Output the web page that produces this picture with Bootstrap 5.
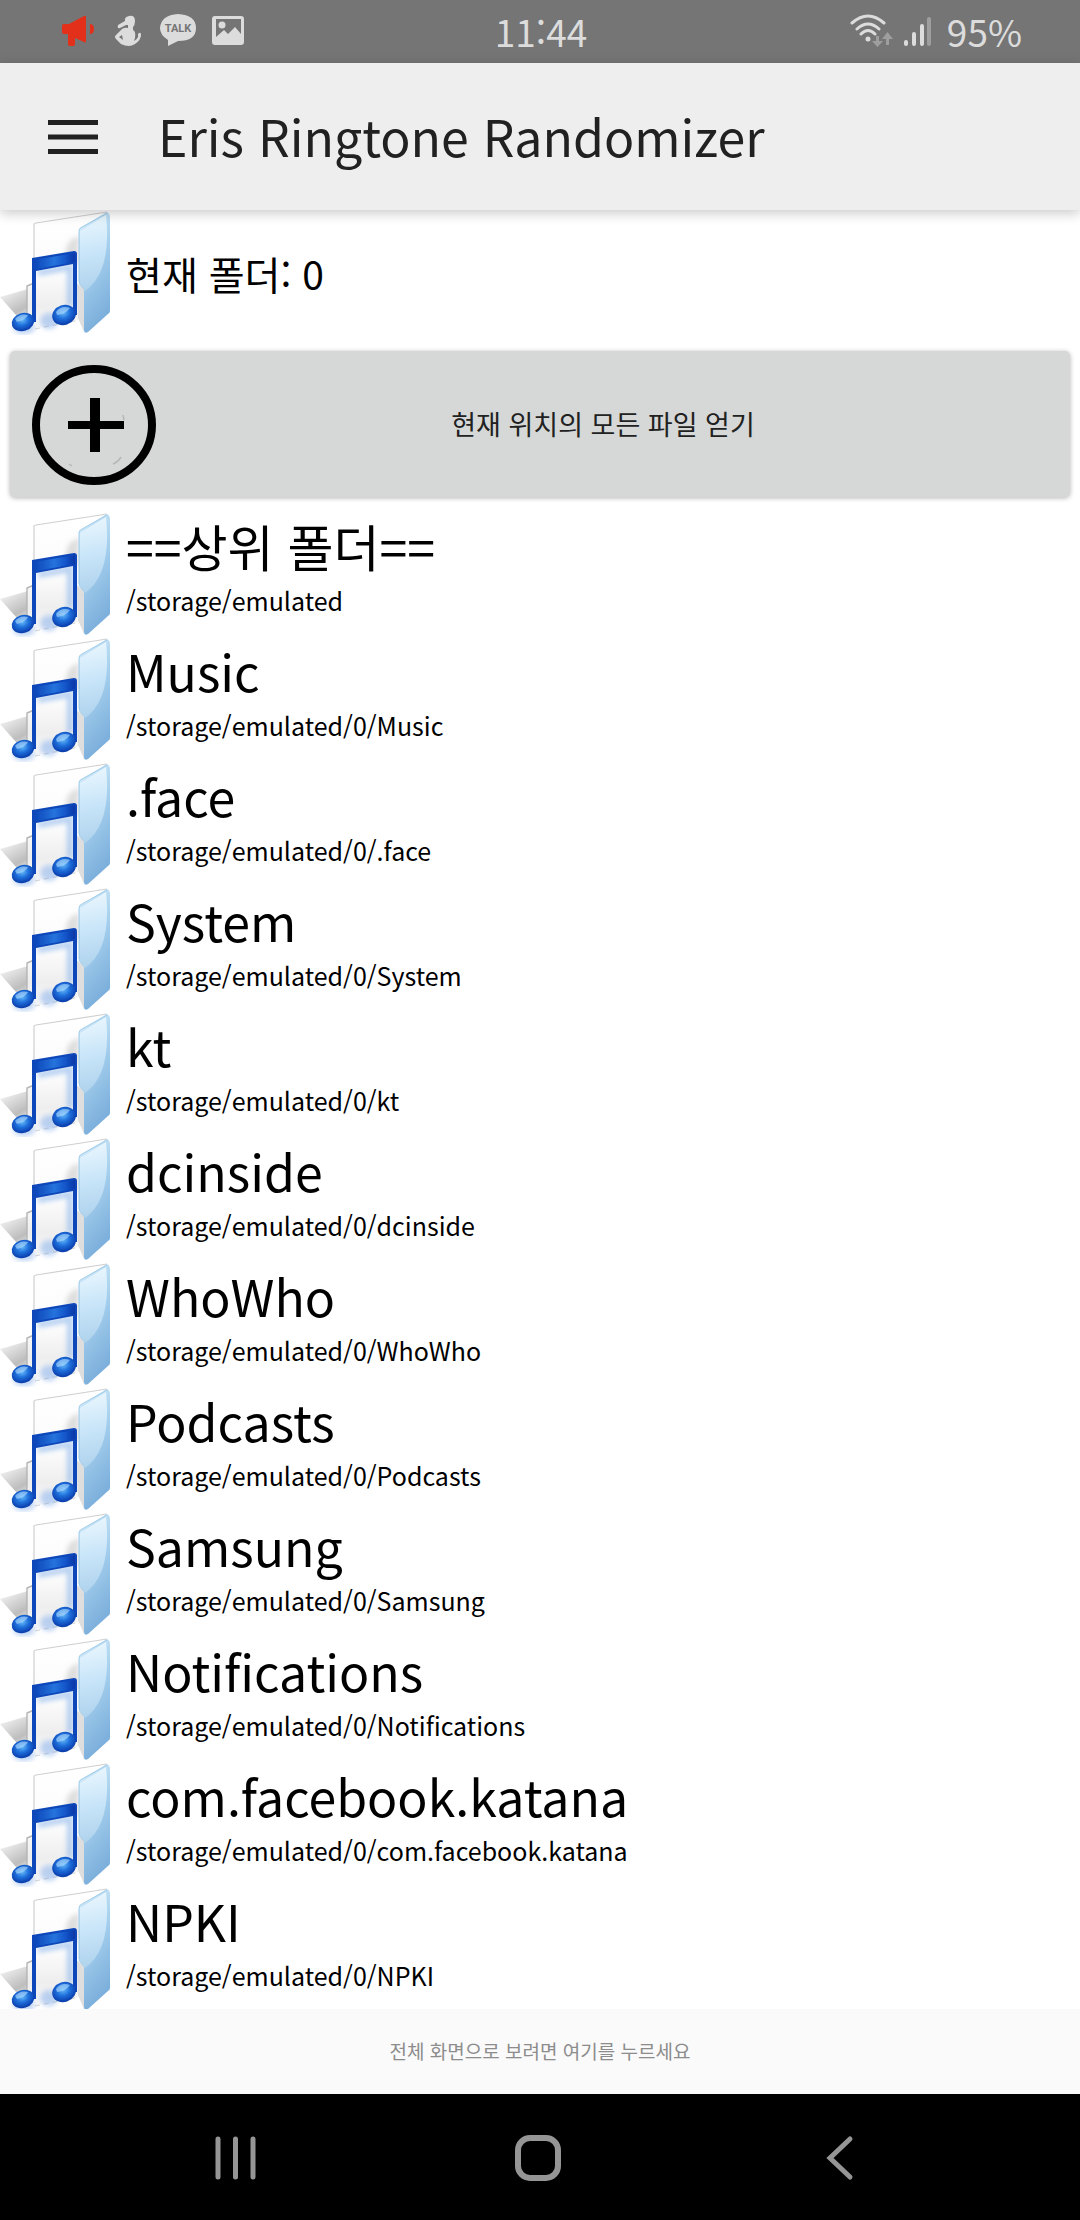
<!DOCTYPE html>
<html lang="ko">
<head>
<meta charset="utf-8">
<meta name="viewport" content="width=device-width, initial-scale=1">
<title>Eris Ringtone Randomizer</title>
<link href="https://cdn.jsdelivr.net/npm/bootstrap@5.3.0/dist/css/bootstrap.min.css" rel="stylesheet">
<style>
  body { font-family: "Noto Sans CJK KR", sans-serif; color: #000; }
  .status-bar { height: 63px; background: #757575; color: #dcdcdc; font-size: 37px; line-height: 60px; padding: 0 58px 2px 60px; }
  .status-side { flex: 1 1 0; }
  .app-bar { height: 147px; background: #eee; box-shadow: 0 3px 12px rgba(0, 0, 0, .22); padding: 0 48px; gap: 60px; z-index: 2; }
  .app-title { font-size: 50px; line-height: 60px; padding-bottom: 4px; color: #212121; }
  .folder-icon { width: 110px; height: 125px; flex: none; }
  .current-folder { height: 125px; font-size: 39px; line-height: 48px; gap: 16px; }
  .fetch-btn { margin: 16px 10px 5px; padding: 0 22px; height: 146px; background: #d6d8d7; color: #212121; font-size: 27px; border-radius: 5px; box-shadow: 0 1px 5px rgba(0, 0, 0, .3); z-index: 1; }
  .file-list { flex: 1 1 0; min-height: 0; overflow: hidden; padding-top: 10px; --bs-list-group-color: #000; }
  .file-row { height: 125px; gap: 16px; flex: none; }
  .file-name { font-size: 50px; line-height: 66px; }
  .file-path { font-size: 25px; line-height: 44px; }
  .ad-strip { height: 85px; background: #fafafa; color: #8c8c8c; font-size: 19px; }
  .nav-keys { height: 126px; background: #000; padding: 2px 89px 0 85px; }
</style>
<script src="https://cdn.jsdelivr.net/npm/bootstrap@5.3.0/dist/js/bootstrap.bundle.min.js"></script>
</head>
<body>
<svg width="0" height="0" class="position-absolute" aria-hidden="true">
  <defs>
    <linearGradient id="panel" x1="0" y1="0" x2=".3" y2="1"><stop offset="0" stop-color="#d8effc"/><stop offset=".5" stop-color="#a5cfed"/><stop offset="1" stop-color="#7db0dc"/></linearGradient>
    <linearGradient id="gloss" x1="0" y1="0" x2="0" y2="1"><stop offset="0" stop-color="#f2fbff"/><stop offset=".5" stop-color="#cfe9fb"/><stop offset="1" stop-color="#b5d6ee"/></linearGradient>
    <linearGradient id="sheet" x1="0" y1="0" x2="0" y2="1"><stop offset="0" stop-color="#fff"/><stop offset=".55" stop-color="#fbfbfb"/><stop offset=".8" stop-color="#eee"/><stop offset="1" stop-color="#fafafa"/></linearGradient>
    <linearGradient id="cast" x1=".2" y1="0" x2=".8" y2="1"><stop offset="0" stop-color="#f4f4f4"/><stop offset=".8" stop-color="#bdbdbd"/><stop offset="1" stop-color="#d8d8d8"/></linearGradient>
    <linearGradient id="beam" x1="0" y1="0" x2="1" y2="0"><stop offset="0" stop-color="#0b45b8"/><stop offset=".5" stop-color="#2673dc"/><stop offset=".75" stop-color="#1457cc"/><stop offset="1" stop-color="#0737a6"/></linearGradient>
    <radialGradient id="head" cx=".5" cy=".4" r=".62"><stop offset="0" stop-color="#62b6f7"/><stop offset=".45" stop-color="#1f6fdb"/><stop offset="1" stop-color="#0635a4"/></radialGradient>
    <filter id="haze" x="-30%" y="-30%" width="160%" height="160%"><feGaussianBlur stdDeviation="2.5"/></filter>
    <filter id="soft" x="-10%" y="-10%" width="120%" height="120%"><feGaussianBlur stdDeviation=".7"/></filter>
    <symbol id="folder" viewBox="0 0 110 125">
      <path d="M0 87 28 79V106L16 105Z" fill="url(#cast)" filter="url(#soft)"/>
      <path d="M27 76 34 73V13L108 2V100L84 109 34 119V112H27Z" fill="url(#sheet)"/>
      <path d="M34 72V15Q34 13 36 13L107 2" fill="none" stroke="#cfcfcf" stroke-width="1.2"/>
      <path d="M34 73 27 76V105" fill="none" stroke="#b5b5b5" stroke-width="1.4"/>
      <path d="M79 26Q64 30 66 48L78 56Z" fill="#dedede" filter="url(#haze)"/>
      <path d="M35 119 84 109" fill="none" stroke="#d5d5d5" stroke-width="1.2" stroke-dasharray="5 4"/>
      <path d="M77 74 84 78V122L78 108Z" fill="#dedede"/>
      <path d="M79 21Q79 18 82 17L107 2Q110 3 110 8V101Q110 103 108 104L88 122Q84 124 84 120V80L79 74Z" fill="url(#panel)" filter="url(#soft)"/>
      <path d="M80 21 106 5Q112 62 85 81L80 74Z" fill="url(#gloss)" opacity=".8"/>
      <path d="M79 72V21Q79 18 82 17L107 3" fill="none" stroke="#a3cde8" stroke-width="1"/>
      <g filter="url(#haze)" opacity=".5"><path d="M38 63 70 57V96" fill="none" stroke="#6fa4e8" stroke-width="6"/><ellipse cx="49" cy="111" rx="9" ry="8" fill="#7faae9"/><ellipse cx="24" cy="118" rx="11" ry="6" fill="#7faae9"/></g>
      <g filter="url(#soft)">
        <path d="M32 48 74 41Q77 41 77 44V105H73V54L36 61V112H32Z" fill="#0c46ba"/>
        <path d="M34 50 75 43V52L36 59Z" fill="url(#beam)"/>
        <ellipse cx="23" cy="112" rx="11.5" ry="9" fill="url(#head)" transform="rotate(-18 23 112)"/>
        <ellipse cx="64" cy="105" rx="12" ry="10" fill="url(#head)" transform="rotate(-18 64 105)"/>
        <path d="M15 109Q20 103 28 105 26 110 17 112ZM56 102Q61 95 70 98 66 104 57 105Z" fill="#b5e0ff" opacity=".6"/>
      </g>
    </symbol>
  </defs>
</svg>

<div class="vh-100 d-flex flex-column bg-white overflow-hidden">
  <div class="status-bar d-flex align-items-center flex-shrink-0">
    <div class="status-side d-flex align-items-center">
      <svg width="184" height="36" viewBox="0 0 184 36" role="img" aria-label="알림">
        <path d="M4 11H9L24 3Q26 2 26 4V28Q26 31 24 29L15 25V31Q15 33 13 33H10Q8 33 8 31V21H4Q2 21 2 19V13Q2 11 4 11ZM30 11Q34 11 34 16T30 21Z" fill="#e2301b"/>
        <g fill="#dcdcdc">
          <path d="M69 3Q75 2 75 8 75 12 73 14V17Q76 18 75 25L74 28Q79 25 78 22V21Q81 18 81 22 81 27 75 31 69 35 61 31L56 26Q54 24 56 22L62 16Q65 14 68 15V12H66L60 15Q57 16 58 12L65 8Q64 4 69 3ZM59 24 63 27 62 22Z"/>
          <path d="M118 1Q136 2 136 15T118 28L108 33 108 27Q100 22 100 15 101 2 118 1Z"/>
          <path fill-rule="evenodd" d="M155 3H181Q184 3 184 6V29Q184 32 181 32H155Q152 32 152 29V6Q152 3 155 3ZM156 6V24L164 17 168 21 175 14 181 21V6Z"/>
          <circle cx="162" cy="12" r="3.5"/>
        </g>
        <text x="118" y="19" text-anchor="middle" font-family="Roboto, sans-serif" font-weight="700" font-size="11" fill="#757575">TALK</text>
      </svg>
    </div>
    <div>11:44</div>
    <div class="status-side d-flex align-items-center justify-content-end gap-3">
      <svg width="81" height="34" viewBox="0 0 81 34" role="img" aria-label="Wi-Fi">
        <g fill="none" stroke="#dcdcdc" stroke-width="3" stroke-linecap="round"><path d="M2 9Q18-5 34 9M7 15Q18 5 29 15M11 20Q18 13 25 20"/></g>
        <circle cx="18" cy="25" r="2.5" fill="#dcdcdc"/>
        <path d="M26 22H29V27H33L27.500 33 22 27H26ZM36 31V25H32L37.500 18 43 25H39V31Z" fill="#9e9e9e"/>
        <g stroke="#dcdcdc" stroke-width="4" stroke-linecap="round"><path d="M56 28V30M64 20V30M72 12V30"/><path d="M79 5V30" stroke="#9e9e9e"/></g>
      </svg>
      <span>95%</span>
    </div>
  </div>

  <header class="app-bar d-flex align-items-center flex-shrink-0 position-relative">
    <button type="button" class="btn p-0 border-0 lh-1" aria-label="메뉴">
      <svg class="d-block" width="50" height="34" viewBox="0 0 50 34"><path d="M0 2.500H50M0 17H50M0 31.500H50" stroke="#212121" stroke-width="5"/></svg>
    </button>
    <h1 class="app-title fw-normal m-0">Eris Ringtone Randomizer</h1>
  </header>

  <div class="current-folder d-flex align-items-center flex-shrink-0">
    <svg class="folder-icon" aria-hidden="true"><use href="#folder"/></svg>
    <span>현재 폴더: 0</span>
  </div>

  <button type="button" class="fetch-btn btn border-0 d-flex align-items-center flex-shrink-0">
    <svg width="126" height="124" viewBox="0 0 126 124" aria-hidden="true">
      <ellipse cx="62" cy="63" rx="58" ry="56" fill="none" stroke="#000" stroke-width="8"/>
      <path d="M36 63H92" stroke="#000" stroke-width="8"/><path d="M63 36V90" stroke="#000" stroke-width="10"/>
      <path d="M81 102Q86 100 89 95M91 53 92 58M37 102 40 104" fill="none" stroke="#b5b7b6" stroke-width="1.500"/>
    </svg>
    <span class="flex-fill text-center">현재 위치의 모든 파일 얻기</span>
  </button>

  <div class="file-list list-group list-group-flush rounded-0">
    <a href="#" class="file-row list-group-item list-group-item-action border-0 p-0 d-flex align-items-start"><svg class="folder-icon" aria-hidden="true"><use href="#folder"/></svg><span class="d-flex flex-column"><span class="file-name">==상위 폴더==</span><span class="file-path">/storage/emulated</span></span></a>
    <a href="#" class="file-row list-group-item list-group-item-action border-0 p-0 d-flex align-items-start"><svg class="folder-icon" aria-hidden="true"><use href="#folder"/></svg><span class="d-flex flex-column"><span class="file-name">Music</span><span class="file-path">/storage/emulated/0/Music</span></span></a>
    <a href="#" class="file-row list-group-item list-group-item-action border-0 p-0 d-flex align-items-start"><svg class="folder-icon" aria-hidden="true"><use href="#folder"/></svg><span class="d-flex flex-column"><span class="file-name">.face</span><span class="file-path">/storage/emulated/0/.face</span></span></a>
    <a href="#" class="file-row list-group-item list-group-item-action border-0 p-0 d-flex align-items-start"><svg class="folder-icon" aria-hidden="true"><use href="#folder"/></svg><span class="d-flex flex-column"><span class="file-name">System</span><span class="file-path">/storage/emulated/0/System</span></span></a>
    <a href="#" class="file-row list-group-item list-group-item-action border-0 p-0 d-flex align-items-start"><svg class="folder-icon" aria-hidden="true"><use href="#folder"/></svg><span class="d-flex flex-column"><span class="file-name">kt</span><span class="file-path">/storage/emulated/0/kt</span></span></a>
    <a href="#" class="file-row list-group-item list-group-item-action border-0 p-0 d-flex align-items-start"><svg class="folder-icon" aria-hidden="true"><use href="#folder"/></svg><span class="d-flex flex-column"><span class="file-name">dcinside</span><span class="file-path">/storage/emulated/0/dcinside</span></span></a>
    <a href="#" class="file-row list-group-item list-group-item-action border-0 p-0 d-flex align-items-start"><svg class="folder-icon" aria-hidden="true"><use href="#folder"/></svg><span class="d-flex flex-column"><span class="file-name">WhoWho</span><span class="file-path">/storage/emulated/0/WhoWho</span></span></a>
    <a href="#" class="file-row list-group-item list-group-item-action border-0 p-0 d-flex align-items-start"><svg class="folder-icon" aria-hidden="true"><use href="#folder"/></svg><span class="d-flex flex-column"><span class="file-name">Podcasts</span><span class="file-path">/storage/emulated/0/Podcasts</span></span></a>
    <a href="#" class="file-row list-group-item list-group-item-action border-0 p-0 d-flex align-items-start"><svg class="folder-icon" aria-hidden="true"><use href="#folder"/></svg><span class="d-flex flex-column"><span class="file-name">Samsung</span><span class="file-path">/storage/emulated/0/Samsung</span></span></a>
    <a href="#" class="file-row list-group-item list-group-item-action border-0 p-0 d-flex align-items-start"><svg class="folder-icon" aria-hidden="true"><use href="#folder"/></svg><span class="d-flex flex-column"><span class="file-name">Notifications</span><span class="file-path">/storage/emulated/0/Notifications</span></span></a>
    <a href="#" class="file-row list-group-item list-group-item-action border-0 p-0 d-flex align-items-start"><svg class="folder-icon" aria-hidden="true"><use href="#folder"/></svg><span class="d-flex flex-column"><span class="file-name">com.facebook.katana</span><span class="file-path">/storage/emulated/0/com.facebook.katana</span></span></a>
    <a href="#" class="file-row list-group-item list-group-item-action border-0 p-0 d-flex align-items-start"><svg class="folder-icon" aria-hidden="true"><use href="#folder"/></svg><span class="d-flex flex-column"><span class="file-name">NPKI</span><span class="file-path">/storage/emulated/0/NPKI</span></span></a>
  </div>

  <a href="#" class="ad-strip d-flex align-items-center justify-content-center flex-shrink-0 text-decoration-none">전체 화면으로 보려면 여기를 누르세요</a>

  <nav class="nav-keys d-flex align-items-center flex-shrink-0" aria-label="시스템">
    <button type="button" class="btn border-0 p-0 flex-fill w-100" aria-label="최근 앱"><svg width="46" height="46" viewBox="0 0 46 46"><path d="M5 4V42M22.500 4V42M40 4V42" stroke="#959595" stroke-width="5" stroke-linecap="round"/></svg></button>
    <button type="button" class="btn border-0 p-0 flex-fill w-100" aria-label="홈"><svg width="46" height="46" viewBox="0 0 46 46"><rect x="3" y="3" width="40" height="40" rx="12" fill="none" stroke="#959595" stroke-width="6"/></svg></button>
    <button type="button" class="btn border-0 p-0 flex-fill w-100" aria-label="뒤로"><svg width="46" height="46" viewBox="0 0 46 46"><path d="M33 4 13 23 33 42" fill="none" stroke="#959595" stroke-width="5" stroke-linecap="round"/></svg></button>
  </nav>
</div>
</body>
</html>
